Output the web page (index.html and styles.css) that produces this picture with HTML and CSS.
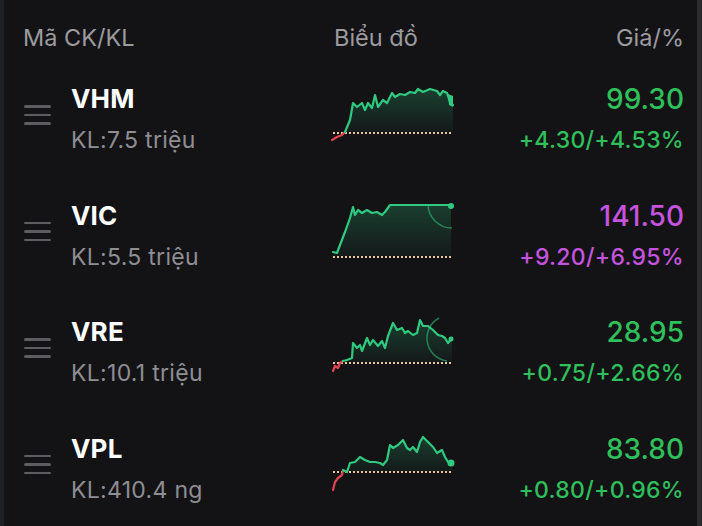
FILE: index.html
```html
<!DOCTYPE html>
<html lang="vi">
<head>
  <meta charset="UTF-8" />
  <title>Danh mục</title>
  <link rel="stylesheet" href="styles.css">
</head>
<body>

  <svg class="defs" width="0" height="0">
    <defs>
      <linearGradient id="area" x1="0" y1="0" x2="0" y2="1">
        <stop offset="0" stop-color="#2fc97f" stop-opacity="0.24" />
        <stop offset="1" stop-color="#2fc97f" stop-opacity="0.03" />
      </linearGradient>
    </defs>
  </svg>

  <div class="screen">
    <div class="list-head">
      <div class="col-name">Mã CK/KL</div>
      <div class="col-chart">Biểu đồ</div>
      <div class="col-price">Giá/%</div>
    </div>

    <div class="rows">

      <div class="row">
        <div class="drag"><span></span><span></span><span></span></div>
        <div class="code">VHM</div>
        <div class="vol">KL:7.5 triệu</div>
        <svg class="spark" viewBox="0 0 124 72" width="124" height="72">
          <path class="fill" d="M14 48 L19 36 L22 19 L26 23 L31 19 L34 26 L37 19 L41 24 L44 11 L47 23 L52 16 L56 19 L61 9 L64 13 L69 10 L74 11 L79 8 L84 9 L87 5 L92 8 L99 5 L106 7 L109 11 L112 7 L116 9 L119 18 L122 21 L122 49 L14 49 Z" />
          <line class="ref" x1="2" y1="49" x2="122" y2="49" />
          <polyline class="down" points="1,56 6,53 11,51 14,48" />
          <polyline class="up" points="14,48 19,36 22,19 26,23 31,19 34,26 37,19 41,24 44,11 47,23 52,16 56,19 61,9 64,13 69,10 74,11 79,8 84,9 87,5 92,8 99,5 106,7 109,11 112,7 116,9 119,18 122,21" />
          <path class="tail" d="M117 10 L122 12 L122 23 L118 21 Z" />
        </svg>
        <div class="price up-text">99.30</div>
        <div class="change up-text">+4.30/+4.53%</div>
      </div>

      <div class="row">
        <div class="drag"><span></span><span></span><span></span></div>
        <div class="code">VIC</div>
        <div class="vol">KL:5.5 triệu</div>
        <svg class="spark" viewBox="0 0 124 72" width="124" height="72">
          <path class="fill" d="M2 51 L6 52 L9 44 L14 31 L19 17 L22 6 L24 14 L27 9 L31 12 L36 9 L41 12 L46 11 L51 14 L54 11 L59 4 L120 4 L120 56 L2 56 Z" />
          <line class="ref" x1="2" y1="56" x2="122" y2="56" />
          <polyline class="up" points="2,51 6,52 9,44 14,31 19,17 22,6 24,14 27,9 31,12 36,9 41,12 46,11 51,14 54,11 59,4 120,4" />
          <path class="ring" d="M97 3 A24 24 0 0 0 121 27" />
          <circle class="dot" cx="120" cy="5" r="3" />
        </svg>
        <div class="price ceil-text">141.50</div>
        <div class="change ceil-text">+9.20/+6.95%</div>
      </div>

      <div class="row">
        <div class="drag"><span></span><span></span><span></span></div>
        <div class="code">VRE</div>
        <div class="vol">KL:10.1 triệu</div>
        <svg class="spark" viewBox="0 0 124 72" width="124" height="72">
          <path class="fill" d="M12 44 L16 43 L21 41 L22 26 L26 31 L29 28 L31 34 L36 21 L39 28 L42 23 L47 29 L51 24 L54 31 L57 19 L62 6 L66 13 L71 11 L74 16 L77 14 L82 18 L86 16 L89 3 L92 9 L97 9 L102 13 L107 18 L111 19 L114 21 L117 26 L121 21 L121 46 L12 46 Z" />
          <line class="ref" x1="2" y1="46" x2="122" y2="46" />
          <polyline class="down" points="2,54 4,49 7,51 9,46 12,44" />
          <polyline class="up" points="12,44 16,43 21,41 22,26 26,31 29,28 31,34 36,21 39,28 42,23 47,29 51,24 54,31 57,19 62,6 66,13 71,11 74,16 77,14 82,18 86,16 89,3 92,9 97,9 102,13 107,18 111,19 114,21 117,26 121,21" />
          <path class="ring" d="M108 1 A23 23 0 0 0 116 44" />
          <circle class="dot" cx="120" cy="22" r="2.5" />
        </svg>
        <div class="price up-text">28.95</div>
        <div class="change up-text">+0.75/+2.66%</div>
      </div>

      <div class="row">
        <div class="drag"><span></span><span></span><span></span></div>
        <div class="code">VPL</div>
        <div class="vol">KL:410.4 ng</div>
        <svg class="spark" viewBox="0 0 124 72" width="124" height="72">
          <path class="fill" d="M12 36 L16 38 L19 29 L24 28 L29 23 L34 26 L39 28 L44 28 L49 29 L52 31 L56 26 L59 11 L62 14 L67 11 L72 6 L76 14 L79 16 L82 13 L86 18 L89 8 L92 3 L97 8 L102 13 L106 19 L111 16 L114 23 L117 28 L121 29 L121 38 L12 38 Z" />
          <line class="ref" x1="2" y1="38" x2="122" y2="38" />
          <polyline class="down" points="2,56 4,48 7,44 11,41 12,36" />
          <polyline class="up" points="12,36 16,38 19,29 24,28 29,23 34,26 39,28 44,28 49,29 52,31 56,26 59,11 62,14 67,11 72,6 76,14 79,16 82,13 86,18 89,8 92,3 97,8 102,13 106,19 111,16 114,23 117,28 121,29" />
          <circle class="dot" cx="120" cy="29" r="3.5" />
        </svg>
        <div class="price up-text">83.80</div>
        <div class="change up-text">+0.80/+0.96%</div>
      </div>

    </div>
  </div>

</body>
</html>
```

FILE: styles.css
```css
* {
  margin: 0; padding: 0; box-sizing: border-box;
}

html, body {
  height: 100%;
  background: #131316;
  font-family: Inter, 'Noto Sans', sans-serif;
  color: white;
  overflow: hidden;
}

.defs {
  position: absolute;
}

.screen {
  min-height: 526px;
  border-left: 4px solid #1f2023;
  border-right: 5px solid #2b2b2f;
  padding: 24px 13px 0 19px;
}

.list-head,
.row {
  display: grid;
  grid-template-columns: 48px 260px 124px 1fr;
}

.list-head {
  font-size: 23.5px;
  line-height: 28px;
  color: #9b9ba0;
  margin-bottom: 32px;
}

.list-head .col-name {
  grid-column: 1 / 3;
}

.list-head .col-chart {
  padding-left: 3px;
}

.list-head .col-price {
  text-align: right;
}

.rows {
  display: flex;
  flex-direction: column;
  gap: 45.67px;
}

.row {
  grid-template-rows: 30px 30px;
  row-gap: 11px;
}

.drag {
  grid-row: 1 / 3;
  display: flex;
  flex-direction: column;
  gap: 6px;
  width: 27px;
  margin: 21px 0 0 1px;
}

.drag span {
  height: 2.5px;
  border-radius: 2px;
  background: #5c5c61;
}

.code {
  font-size: 26px;
  line-height: 30px;
  font-weight: 700;
  letter-spacing: 0.2px;
}

.vol {
  grid-column: 2;
  font-size: 23px;
  line-height: 30px;
  letter-spacing: 0.3px;
  color: #8e8e93;
}

.spark {
  grid-column: 3;
  grid-row: 1 / 3;
  overflow: visible;
}

.spark .ref {
  stroke: #e9c79d;
  stroke-width: 2;
  stroke-dasharray: 2 2;
}

.spark polyline {
  fill: none;
  stroke-width: 2.2;
  stroke-linejoin: round;
  stroke-linecap: round;
}

.spark .up { stroke: #2fc97f; }
.spark .down { stroke: #e0444f; }
.spark .fill { fill: url(#area); }
.spark .dot,
.spark .tail { fill: #2fc97f; }

.spark .ring {
  fill: none;
  stroke: #2fc97f;
  stroke-opacity: 0.55;
  stroke-width: 1.5;
}

.price {
  grid-column: 4;
  grid-row: 1;
  text-align: right;
  font-size: 28px;
  line-height: 30px;
  font-weight: 500;
}

.change {
  grid-column: 4;
  grid-row: 2;
  text-align: right;
  font-size: 23px;
  line-height: 30px;
  letter-spacing: 0.3px;
  font-weight: 500;
}

.up-text { color: #2fbf5b; }
.ceil-text { color: #c553df; }
```
